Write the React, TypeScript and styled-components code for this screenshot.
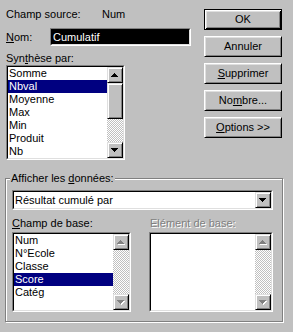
import React from 'react';
import styled, { createGlobalStyle } from 'styled-components';

const Global = createGlobalStyle`
  html, body { margin: 0; padding: 0; background: #c0c0c0; }
  body { font-family: "Liberation Sans", Arial, sans-serif; font-size: 11px; color: #000; }
`;

const Dialog = styled.div`
  width: 293px;
  height: 332px;
  background: #c0c0c0;
  display: flex;
  flex-direction: column;
  font-family: "Liberation Sans", Arial, sans-serif;
  font-size: 11px;
  line-height: 13px;
  color: #000;
  overflow: hidden;
`;

const Top = styled.div`
  display: flex;
  height: 178px;
`;

const LeftCol = styled.div`
  width: 204px;
  box-sizing: border-box;
  padding: 8px 0 0 6px;
  display: flex;
  flex-direction: column;
`;

const SourceRow = styled.div`
  display: flex;
  height: 13px;
`;

const SourceLabel = styled.span`
  width: 96px;
`;

const NomRow = styled.div`
  display: flex;
  align-items: center;
  margin-top: 7px;
  height: 18px;
`;

const NomLabel = styled.span`
  width: 44px;
`;

const Sunken = styled.div<{ $w: number; $h: number }>`
  width: ${(p) => p.$w}px;
  height: ${(p) => p.$h}px;
  box-sizing: border-box;
  border-style: solid;
  border-width: 1px;
  border-color: #808080 #fff #fff #808080;
  display: flex;
`;

const SunkenInner = styled.div<{ $bg?: string }>`
  flex: 1;
  box-sizing: border-box;
  border-style: solid;
  border-width: 1px;
  border-color: #000 #dfdfdf #dfdfdf #000;
  background: ${(p) => p.$bg ?? '#fff'};
  display: flex;
  min-width: 0;
`;

const NomText = styled.span`
  color: #fff;
  padding-left: 1px;
  line-height: 14px;
`;

const Caption = styled.div<{ $mt?: number }>`
  height: 13px;
  margin-top: ${(p) => p.$mt ?? 0}px;
`;

const DisabledCaption = styled.div`
  height: 13px;
  padding-left: 1px;
  color: #808080;
  text-shadow: 1px 1px 0 #fff;
`;

const U = styled.span`
  text-decoration: underline;
  text-underline-offset: 1px;
`;

const Items = styled.div`
  flex: 1;
  display: flex;
  flex-direction: column;
  min-width: 0;
`;

const Item = styled.div<{ $sel?: boolean }>`
  height: 13px;
  line-height: 13px;
  padding-left: 1px;
  white-space: nowrap;
  background: ${(p) => (p.$sel ? '#000080' : 'transparent')};
  color: ${(p) => (p.$sel ? '#fff' : '#000')};
`;

const ScrollBar = styled.div`
  width: 16px;
  display: flex;
  flex-direction: column;
`;

const Bevel = styled.div<{ $h?: number }>`
  width: 16px;
  height: ${(p) => p.$h ?? 16}px;
  box-sizing: border-box;
  background: #c0c0c0;
  border-style: solid;
  border-width: 1px;
  border-color: #dfdfdf #000 #000 #dfdfdf;
  box-shadow: inset 1px 1px #fff, inset -1px -1px #808080;
  display: flex;
  align-items: center;
  justify-content: center;
  flex-shrink: 0;
`;

const Track = styled.div`
  flex: 1;
  background-color: #fff;
  background-image: repeating-conic-gradient(#c0c0c0 0% 25%, #fff 0% 50%);
  background-size: 2px 2px;
`;

const RightCol = styled.div`
  padding-top: 9px;
  display: flex;
  flex-direction: column;
  gap: 6px;
`;

const Button = styled.div<{ $default?: boolean }>`
  width: 78px;
  height: 21px;
  box-sizing: border-box;
  background: #c0c0c0;
  border-style: solid;
  border-width: 1px;
  border-color: ${(p) => (p.$default ? '#000' : '#fff #000 #000 #fff')};
  box-shadow: ${(p) =>
    p.$default
      ? 'inset 1px 1px #fff, inset -1px -1px #000, inset 2px 2px #dfdfdf, inset -2px -2px #808080'
      : 'inset 1px 1px #dfdfdf, inset -1px -1px #808080'};
  display: flex;
  align-items: center;
  justify-content: center;
  padding-bottom: 1px;
`;

const GroupBox = styled.div`
  position: relative;
  margin-left: 5px;
  width: 278px;
  height: 144px;
  box-sizing: border-box;
  border: 1px solid #808080;
  box-shadow: inset 1px 1px #fff, 1px 1px #fff;
  padding: 11px 0 0 6px;
  display: flex;
  flex-direction: column;
`;

const Legend = styled.div`
  position: absolute;
  top: -7px;
  left: 4px;
  padding: 0 1px;
  background: #c0c0c0;
  line-height: 13px;
`;

const ComboText = styled.span`
  flex: 1;
  padding-left: 1px;
  line-height: 16px;
`;

const BaseGrid = styled.div`
  display: grid;
  grid-template-columns: 119px 124px;
  column-gap: 18px;
  row-gap: 2px;
  margin-top: 7px;
`;

type Dir = 'up' | 'down';

const Arrow: React.FC<{ dir: Dir; disabled?: boolean }> = ({ dir, disabled }) => {
  const rows = [
    [3, 1],
    [2, 3],
    [1, 5],
    [0, 7],
  ];
  const ordered = dir === 'up' ? rows : [...rows].reverse();
  const draw = (dx: number, dy: number, fill: string) =>
    ordered.map(([x, w], i) => (
      <rect key={`${fill}${i}`} x={x + dx} y={i + dy} width={w} height={1} fill={fill} />
    ));
  return (
    <svg width="8" height="5" viewBox="0 0 8 5" shapeRendering="crispEdges">
      {disabled ? (
        <>
          {draw(1, 1, '#fff')}
          {draw(0, 0, '#808080')}
        </>
      ) : (
        draw(0, 0, '#000')
      )}
    </svg>
  );
};

const VScroll: React.FC<{ thumb?: number; disabled?: boolean }> = ({ thumb, disabled }) => (
  <ScrollBar>
    <Bevel>
      <Arrow dir="up" disabled={disabled} />
    </Bevel>
    {thumb ? <Bevel $h={thumb} /> : null}
    <Track />
    <Bevel>
      <Arrow dir="down" disabled={disabled} />
    </Bevel>
  </ScrollBar>
);

const ListBox: React.FC<{
  w: number;
  h: number;
  items: string[];
  selected?: number;
  thumb?: number;
  disabled?: boolean;
}> = ({ w, h, items, selected, thumb, disabled }) => (
  <Sunken $w={w} $h={h}>
    <SunkenInner>
      <Items>
        {items.map((t, i) => (
          <Item key={t} $sel={i === selected}>
            {t}
          </Item>
        ))}
      </Items>
      <VScroll thumb={thumb} disabled={disabled} />
    </SunkenInner>
  </Sunken>
);

export default function App() {
  return (
    <>
      <Global />
      <Dialog>
        <Top>
          <LeftCol>
            <SourceRow>
              <SourceLabel>Champ source:</SourceLabel>
              <span>Num</span>
            </SourceRow>
            <NomRow>
              <NomLabel>
                <U>N</U>om:
              </NomLabel>
              <Sunken $w={141} $h={18}>
                <SunkenInner $bg="#000">
                  <NomText>Cumulatif</NomText>
                </SunkenInner>
              </Sunken>
            </NomRow>
            <Caption $mt={6}>
              Syn<U>t</U>hèse par:
            </Caption>
            <ListBox
              w={119}
              h={95}
              items={['Somme', 'Nbval', 'Moyenne', 'Max', 'Min', 'Produit', 'Nb']}
              selected={1}
              thumb={36}
            />
          </LeftCol>
          <RightCol>
            <Button $default>OK</Button>
            <Button>Annuler</Button>
            <Button>
              <span>
                <U>S</U>upprimer
              </span>
            </Button>
            <Button>
              <span>
                No<U>m</U>bre...
              </span>
            </Button>
            <Button>
              <span>
                <U>O</U>ptions &gt;&gt;
              </span>
            </Button>
          </RightCol>
        </Top>
        <GroupBox>
          <Legend>
            Afficher les <U>d</U>onnées:
          </Legend>
          <Sunken $w={261} $h={20}>
            <SunkenInner>
              <ComboText>Résultat cumulé par</ComboText>
              <Bevel>
                <Arrow dir="down" />
              </Bevel>
            </SunkenInner>
          </Sunken>
          <BaseGrid>
            <Caption>
              <U>C</U>hamp de base:
            </Caption>
            <DisabledCaption>Elément de base:</DisabledCaption>
            <ListBox
              w={119}
              h={80}
              items={['Num', 'N°Ecole', 'Classe', 'Score', 'Catég']}
              selected={3}
              disabled
            />
            <ListBox w={124} h={80} items={[]} disabled />
          </BaseGrid>
        </GroupBox>
      </Dialog>
    </>
  );
}
